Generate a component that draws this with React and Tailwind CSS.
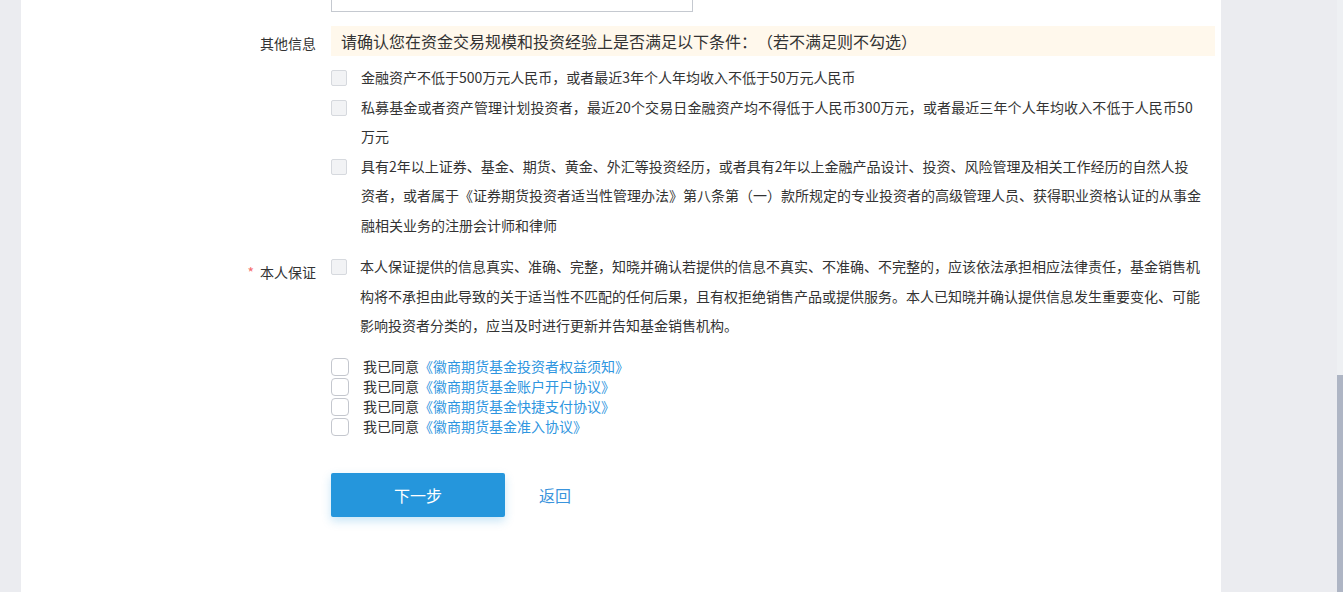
import React from "react";

const font = { fontFamily: '"Noto Sans CJK SC", "Noto Sans", sans-serif' };

function SmallBox() {
  return (
    <div className="mt-[7px] h-[16px] w-[16px] shrink-0 rounded-[2px] border border-[#d6d9de] bg-[#f2f3f5]" />
  );
}

function AgreeBox() {
  return (
    <div className="h-[18px] w-[18px] shrink-0 rounded-[4px] border border-[#c4c7ce] bg-white" />
  );
}

const items = [
  { t: "金融资产不低于500万元人民币，或者最近3年个人年均收入不低于50万元人民币", c: "" },
  {
    t: "私募基金或者资产管理计划投资者，最近20个交易日金融资产均不得低于人民币300万元，或者最近三年个人年均收入不低于人民币50万元",
    c: "tracking-[0.12px]",
  },
  {
    t: "具有2年以上证券、基金、期货、黄金、外汇等投资经历，或者具有2年以上金融产品设计、投资、风险管理及相关工作经历的自然人投资者，或者属于《证券期货投资者适当性管理办法》第八条第（一）款所规定的专业投资者的高级管理人员、获得职业资格认证的从事金融相关业务的注册会计师和律师",
    c: "",
  },
];

const agreements = [
  "《徽商期货基金投资者权益须知》",
  "《徽商期货基金账户开户协议》",
  "《徽商期货基金快捷支付协议》",
  "《徽商期货基金准入协议》",
];

export default function App() {
  return (
    <div
      className="flex h-[592px] w-[1343px] overflow-hidden bg-[#ebecf0] text-[#333] [text-spacing-trim:space-all]"
      style={font}
    >
      <div className="w-[21px] shrink-0" />
      <div className="flex h-full w-[1200px] shrink-0 flex-col bg-white">
        {/* input row (scrolled) */}
        <div className="grid grid-cols-[295px_1fr] gap-x-[15px]">
          <div />
          <div className="h-[12px] w-[362px] border border-t-0 border-[#c5c9d0]" />
        </div>

        {/* 其他信息 */}
        <div className="mt-[14px] grid grid-cols-[295px_1fr] gap-x-[15px]">
          <div className="pt-[2px] text-right text-[14px] leading-[30px]">其他信息</div>
          <div>
            <div className="h-[30px] w-[884px] bg-[#fff8ec] px-[10px] text-[16px] leading-[30px]">
              请确认您在资金交易规模和投资经验上是否满足以下条件：（若不满足则不勾选）
            </div>
            <div className="mt-[7px] flex flex-col">
              {items.map((it, i) => (
                <div key={i} className="flex gap-[14px]">
                  <SmallBox />
                  <div className={"w-[841px] text-[14px] leading-[29.5px] " + it.c}>{it.t}</div>
                </div>
              ))}
            </div>
          </div>
        </div>

        {/* 本人保证 */}
        <div className="mt-[12px] grid grid-cols-[295px_1fr] gap-x-[15px]">
          <div className="pt-[6px] text-right text-[14px] leading-[29.5px]">
            <span className="mr-[6px] text-[#f56c6c]">*</span>本人保证
          </div>
          <div className="flex gap-[13px]">
            <SmallBox />
            <div className="w-[841px] text-[14px] leading-[29.5px]">
              本人保证提供的信息真实、准确、完整，知晓并确认若提供的信息不真实、不准确、不完整的，应该依法承担相应法律责任，基金销售机构将不承担由此导致的关于适当性不匹配的任何后果，且有权拒绝销售产品或提供服务。本人已知晓并确认提供信息发生重要变化、可能影响投资者分类的，应当及时进行更新并告知基金销售机构。
            </div>
          </div>
        </div>

        {/* agreements */}
        <div className="mt-[16px] grid grid-cols-[295px_1fr] gap-x-[15px]">
          <div />
          <div className="flex flex-col">
            {agreements.map((a, i) => (
              <div key={i} className="flex h-[20px] items-center gap-[14px] text-[14px]">
                <AgreeBox />
                <span>
                  我已同意<span className="text-[#2f96e0]">{a}</span>
                </span>
              </div>
            ))}
          </div>
        </div>

        {/* buttons */}
        <div className="mt-[36px] grid grid-cols-[295px_1fr] gap-x-[15px]">
          <div />
          <div className="flex items-center gap-[34px]">
            <button className="flex h-[44px] w-[174px] items-center justify-center rounded-[2px] bg-[#2596dc] text-[16px] text-white shadow-[0_4px_10px_rgba(37,150,220,0.25)]">
              下一步
            </button>
            <span className="text-[16px] text-[#3a94dc]">返回</span>
          </div>
        </div>
      </div>
      <div className="flex-1" />
      <div className="flex h-full w-[6px] shrink-0 flex-col justify-end bg-[#eef0f3]">
        <div className="h-[217px] w-full bg-[#aeb5c4]" />
      </div>
    </div>
  );
}
